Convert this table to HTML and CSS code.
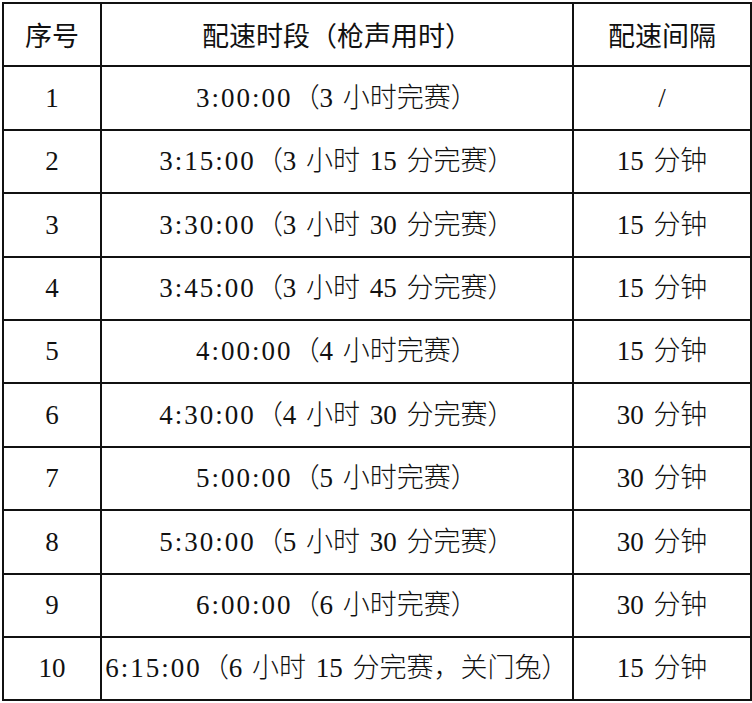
FILE: index.html
```html
<!DOCTYPE html>
<html lang="zh-CN">
<head>
<meta charset="utf-8">
<title>配速时段</title>
<link rel="stylesheet" href="styles.css">
</head>
<body>
<table class="pace">
  <colgroup>
    <col class="c-no">
    <col class="c-time">
    <col class="c-gap">
  </colgroup>
  <thead>
    <tr><th>序号</th><th>配速时段（枪声用时）</th><th>配速间隔</th></tr>
  </thead>
  <tbody>
    <tr><td>1</td><td><span class="t">3:00:00</span>（3 小时完赛）</td><td>/</td></tr>
    <tr><td>2</td><td><span class="t">3:15:00</span>（3 小时 15 分完赛）</td><td>15 分钟</td></tr>
    <tr><td>3</td><td><span class="t">3:30:00</span>（3 小时 30 分完赛）</td><td>15 分钟</td></tr>
    <tr><td>4</td><td><span class="t">3:45:00</span>（3 小时 45 分完赛）</td><td>15 分钟</td></tr>
    <tr><td>5</td><td><span class="t">4:00:00</span>（4 小时完赛）</td><td>15 分钟</td></tr>
    <tr><td>6</td><td><span class="t">4:30:00</span>（4 小时 30 分完赛）</td><td>30 分钟</td></tr>
    <tr><td>7</td><td><span class="t">5:00:00</span>（5 小时完赛）</td><td>30 分钟</td></tr>
    <tr><td>8</td><td><span class="t">5:30:00</span>（5 小时 30 分完赛）</td><td>30 分钟</td></tr>
    <tr><td>9</td><td><span class="t">6:00:00</span>（6 小时完赛）</td><td>30 分钟</td></tr>
    <tr><td>10</td><td><span class="t">6:15:00</span>（6 小时 15 分完赛，关门兔）</td><td>15 分钟</td></tr>
  </tbody>
</table>
</body>
</html>
```
FILE: styles.css
```css
html, body {
  margin: 0;
  padding: 0;
  background: #ffffff;
}

body {
  padding: 2px 0 0 2px;
}

.pace {
  border-collapse: collapse;
  table-layout: fixed;
  width: 748px;
  color: #111111;
}

.pace tr {
  height: 63.4px;
}

.c-no { width: 98px; }
.c-time { width: 472px; }
.c-gap { width: 178px; }

.pace th,
.pace td {
  border: 2px solid #111111;
  text-align: center;
  vertical-align: middle;
  padding: 0;
  white-space: nowrap;
  line-height: 1.2;
}

.pace th {
  font-family: "Noto Sans CJK SC", "Noto Sans", sans-serif;
  font-weight: 400;
  font-size: 27px;
}

.pace td {
  font-family: "Liberation Serif", "Noto Sans CJK SC", serif;
  font-weight: 300;
  font-size: 27px;
  word-spacing: 3px;
}

.t {
  letter-spacing: 2px;
}
```
